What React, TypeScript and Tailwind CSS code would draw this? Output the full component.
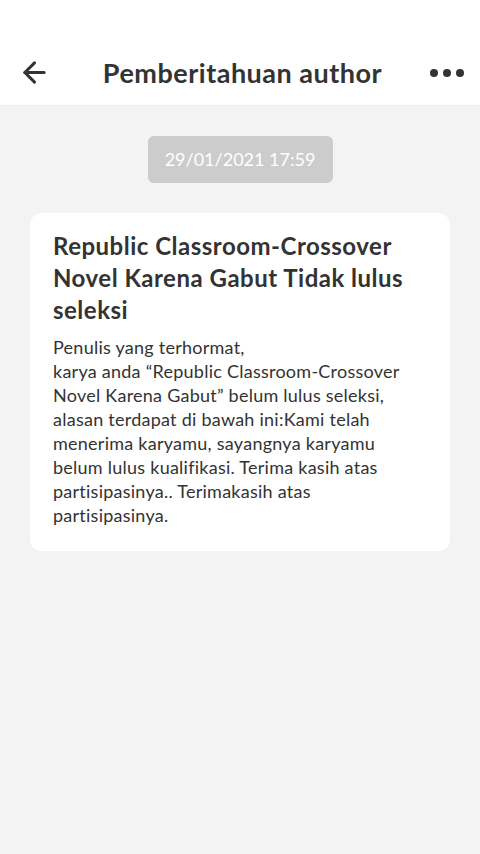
import { ArrowLeft } from 'lucide-react';

export default function App() {
  return (
    <div
      className="min-h-[854px] w-full bg-[#f3f3f3] text-[#333333]"
      style={{ fontFamily: 'Lato, "Noto Sans", sans-serif' }}
    >
      {/* header */}
      <header className="h-[106px] bg-white border-b border-[#ebebeb] flex items-end pb-[11px] pl-[18px] pr-[16px]">
        <div className="flex items-center w-full h-[44px]">
          <ArrowLeft className="w-[33px] h-[33px] text-[#333333]" strokeWidth={2.2} />
          <h1 className="flex-1 text-center text-[27px] font-bold leading-none tracking-[0.5px] pl-[4px]">
            Pemberitahuan author
          </h1>
          <div className="flex items-center gap-[5px] pt-[1px]">
            <span className="w-[8px] h-[8px] rounded-full bg-[#333333]" />
            <span className="w-[8px] h-[8px] rounded-full bg-[#333333]" />
            <span className="w-[8px] h-[8px] rounded-full bg-[#333333]" />
          </div>
        </div>
      </header>

      <div className="flex flex-col items-center pt-[30px] px-[30px]">
        <div className="bg-[#cccccc] rounded-[6px] h-[47px] w-[185px] flex items-center justify-center text-white text-[18px]">
          29/01/2021 17:59
        </div>

        <div className="mt-[30px] w-full bg-white rounded-[12px] px-[23px] pt-[17px] pb-[24px]">
          <h2 className="text-[24px] font-bold leading-[32px] tracking-[0.5px]">
            Republic Classroom-Crossover Novel Karena Gabut Tidak lulus seleksi
          </h2>
          <p className="mt-[9px] text-[18px] leading-[24px] tracking-[0.25px]">
            Penulis yang terhormat,
            <br />
            karya anda “Republic Classroom-Crossover Novel Karena Gabut” belum lulus seleksi,
            alasan terdapat di bawah ini:Kami telah menerima karyamu, sayangnya karyamu belum
            lulus kualifikasi. Terima kasih atas partisipasinya.. Terimakasih atas partisipasinya.
          </p>
        </div>
      </div>
    </div>
  );
}
